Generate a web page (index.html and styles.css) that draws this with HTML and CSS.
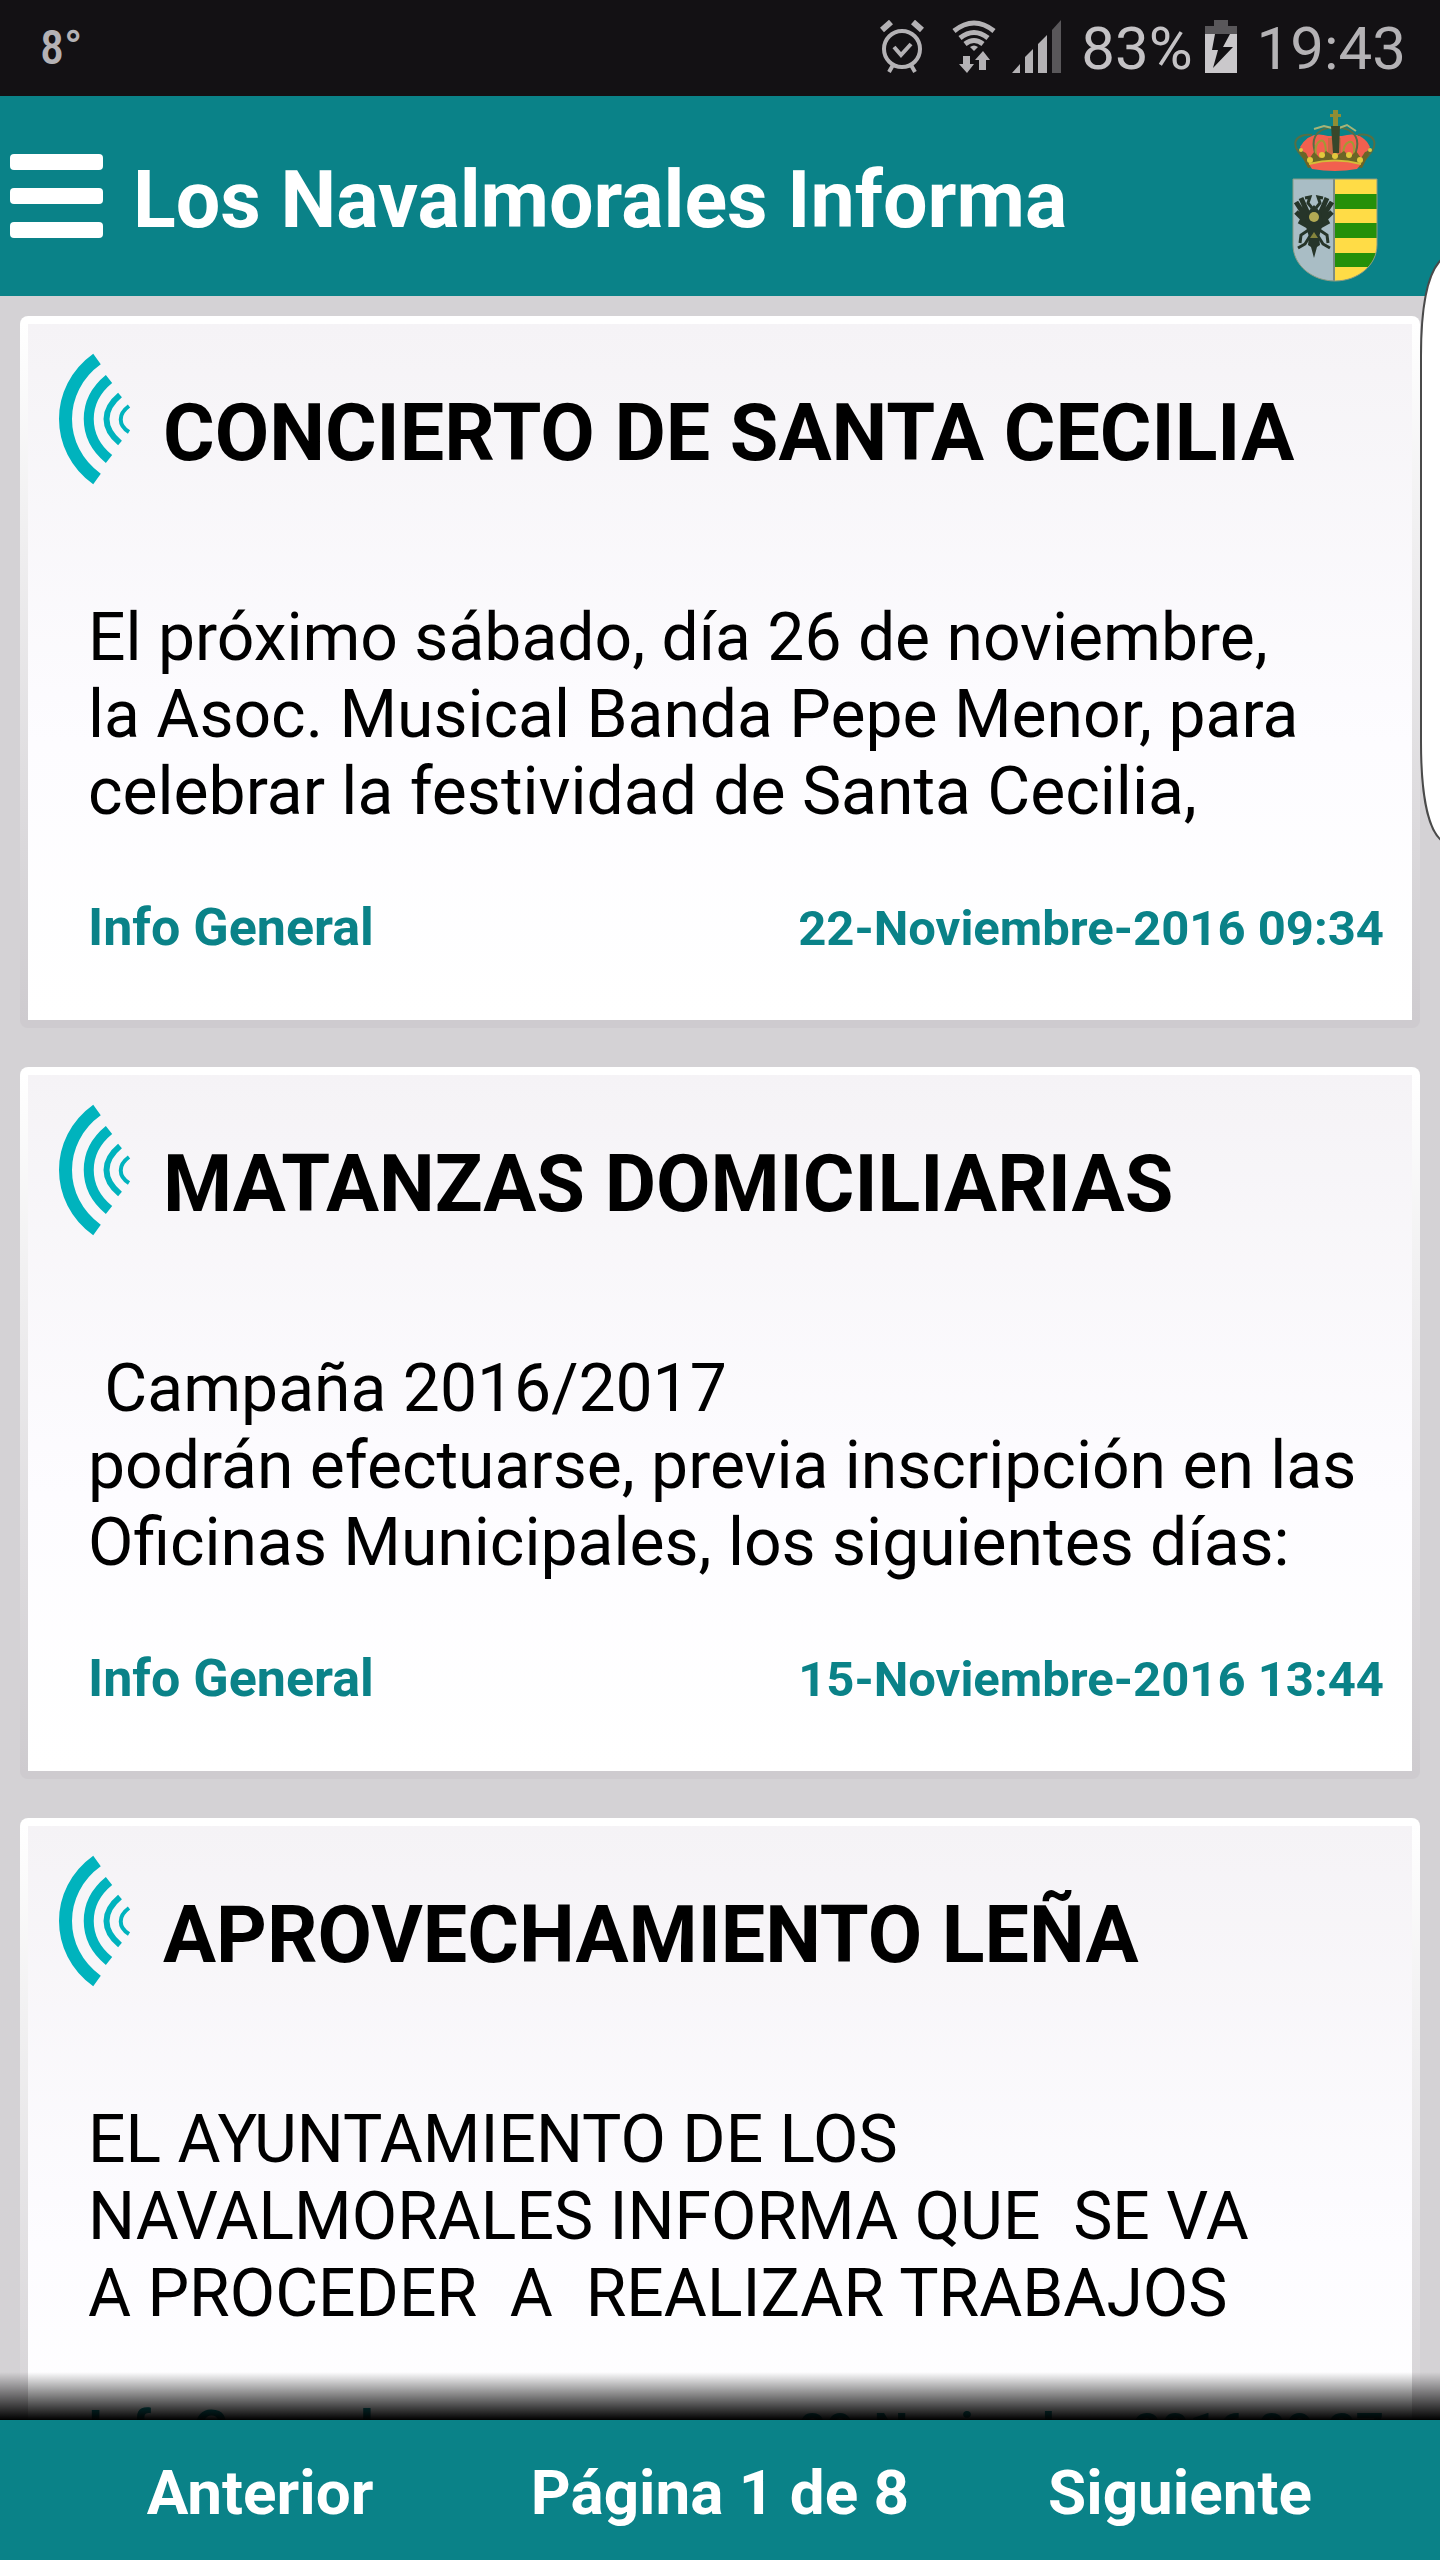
FILE: index.html
```html
<!DOCTYPE html>
<html lang="es">
<head>
<meta charset="utf-8">
<meta name="viewport" content="width=device-width, initial-scale=1">
<title>Los Navalmorales Informa</title>
<link rel="stylesheet" href="styles.css">
</head>
<body>
<svg width="0" height="0" class="sprite" aria-hidden="true">
  <symbol id="waves" viewBox="0 0 74 132">
    <g fill="none" stroke="#00b3bd">
      <path d="M39 6C-3 36-3 96 39 126" stroke-width="13"/>
      <path d="M51 26C24 48 24 84 51 106" stroke-width="10"/>
      <path d="M62 42C44 57 44 75 62 90" stroke-width="6"/>
      <path d="M71 53C60 61 60 72 71 79" stroke-width="4"/>
    </g>
  </symbol>
</svg>
<div class="status">
  <span class="temp">8°</span>
  <div class="status-right">
    <svg class="alarm" width="44" height="54" viewBox="0 0 44 54" fill="none" stroke="#b4b2b5" stroke-width="4">
      <circle cx="22" cy="29" r="18"/><path d="M14 27l7 8 10-11M13 45l-4 7M31 45l4 7"/><path d="M2 10l9-8M42 10l-9-8" stroke-width="6"/>
    </svg>
    <svg class="wifi" width="44" height="54" viewBox="0 0 44 54" fill="none" stroke="#b4b2b5" stroke-width="5">
      <path d="M2 11Q22-5 42 11M8 18Q22 7 36 18M13 24Q22 17 31 24"/><path d="M18 27Q22 24 26 27L22 31z" fill="#b4b2b5" stroke="none"/>
      <path d="M11 36h7v8h4l-7 9-8-9h4zM27 50h7V40h4l-7-9-8 9h4z" fill="#b4b2b5" stroke="none"/>
    </svg>
    <svg class="signal" width="49" height="54" viewBox="0 0 49 54" fill="#b4b2b5">
      <path d="M0 53l8-9v9zM13 53V37l8-8v24zM26 53V24l9-9v38z"/><path d="M40 53V10l9-10v53z" fill="#59575a"/>
    </svg>
    <span class="charge">83%</span>
    <svg class="battery" width="32" height="54" viewBox="0 0 32 54">
      <path d="M0 13h32v40H0z" fill="#cac8cb"/><path d="M9 0h14v6h9v8H0V6h9z" fill="#59575a"/>
      <path d="M10 14h15l-7 13h10L8 48l5-18H7z" fill="#131114"/>
    </svg>
    <span class="clock">19:43</span>
  </div>
</div>
<header class="topbar">
  <button class="menu" type="button" aria-label="Menú"><span></span><span></span><span></span></button>
  <h1 class="app-title">Los Navalmorales Informa</h1>
  <svg class="crest" width="86" height="172" viewBox="0 0 86 172" role="img" aria-label="Escudo">
    <path d="M8 37Q18 20 36 26h14Q70 20 78 37L66 55H20z" fill="#f2604f"/>
    <path d="M36 28h13v22H36z" fill="#c86a45"/>
    <g fill="none" stroke="#4f6b3c" stroke-width="2">
      <path d="M15 51C-6 33 5 23 20 25M71 51C92 33 80 22 66 25M26 50C16 29 24 19 40 17M60 50C72 29 62 19 46 17" stroke="#566f45"/>
      <path d="M24 46q-2-12 4-15t6 14M51 46q0-12 6-14t5 13" stroke="#a09a35"/>
      <path d="M22 19l10-3 8 2M47 18l8-3 9 6" stroke="#a6b478"/>
    </g>
    <path d="M39 16h9l-1 27h-6z" fill="#38472b"/>
    <path d="M41 0h5v4h3v3h-3v9h-5V7h-3V4h3z" fill="#8f8d35"/>
    <path d="M6 39l8 4 3 6 5-7 6 6 6-7 9 6 9-6 6 6 6-6 5 7 4-6 6-2-9 18Q43 52 16 58z" fill="#6b6526"/>
    <g fill="#e2c83c"><circle cx="9" cy="40" r="2"/><circle cx="18" cy="50" r="3"/><circle cx="30" cy="45" r="3"/><circle cx="43" cy="46" r="3"/><circle cx="57" cy="45" r="3"/><circle cx="68" cy="50" r="3"/><circle cx="78" cy="40" r="2"/></g>
    <path d="M17 54Q43 47 69 54l-4 5Q43 63 20 59z" fill="#f2604f"/><path d="M17 54Q43 47 69 54" fill="none" stroke="#d5bc38" stroke-width="2"/>
    <clipPath id="shield"><path d="M1 69h84v66c0 20-19 36-42 36S1 155 1 135z"/></clipPath>
    <g clip-path="url(#shield)">
      <path d="M0 68h43v104H0z" fill="#a9bdc5"/><path d="M43 68h43v104H43z" fill="#ffdc46"/>
      <path d="M43 84h43v15H43zM43 113h43v15H43zM43 143h43v14H43z" fill="#259009"/>
      <path d="M42 68v104" stroke="#7b8b85" stroke-width="2"/>
    </g>
    <path d="M1 69h84v66c0 20-19 36-42 36S1 155 1 135z" fill="none" stroke="#8b9b84" stroke-width="1"/>
    <g fill="none" stroke="#263529" stroke-width="5">
      <path d="M20 98l-4-5 2-6-5 1M24 98l4-5-2-6 5 1" stroke-width="3"/>
      <path d="M17 106L9 88M15 109L4 92M15 113L4 102M16 116L7 111M27 106l8-18M29 109l11-17M29 113l11-11M28 116l9-5"/>
      <path d="M18 119l-9 6-1 8M26 119l9 6 1 8M18 126l-5 8-7 4M26 126l5 8 7 4" stroke-width="3"/>
    </g>
    <path d="M22 95l7 8 2 10-4 14 1 8-3 2-3 11-3-11-3-2 1-8-4-14 2-10z" fill="#263529"/>
    <circle cx="22" cy="107" r="5" fill="#b2aa54"/><path d="M22 122l4 6h-8z" fill="#85853c"/>
  </svg>
</header>
<main class="feed">
  <article class="card">
    <div class="card-head"><svg class="waves" aria-hidden="true"><use href="#waves"/></svg><h2>CONCIERTO DE SANTA CECILIA</h2></div>
    <p class="excerpt">El próximo sábado, día 26 de noviembre,
la Asoc. Musical Banda Pepe Menor, para
celebrar la festividad de Santa Cecilia,</p>
    <div class="meta"><span class="category">Info General</span><time datetime="2016-11-22T09:34">22-Noviembre-2016 09:34</time></div>
  </article>
  <article class="card">
    <div class="card-head"><svg class="waves" aria-hidden="true"><use href="#waves"/></svg><h2>MATANZAS DOMICILIARIAS</h2></div>
    <p class="excerpt"> Campaña 2016/2017
podrán efectuarse, previa inscripción en las
Oficinas Municipales, los siguientes días:</p>
    <div class="meta"><span class="category">Info General</span><time datetime="2016-11-15T13:44">15-Noviembre-2016 13:44</time></div>
  </article>
  <article class="card">
    <div class="card-head"><svg class="waves" aria-hidden="true"><use href="#waves"/></svg><h2>APROVECHAMIENTO LEÑA</h2></div>
    <p class="excerpt">EL AYUNTAMIENTO DE LOS
NAVALMORALES INFORMA QUE  SE VA
A PROCEDER  A  REALIZAR TRABAJOS</p>
    <div class="meta"><span class="category">Info General</span><time datetime="2016-11-09T09:27">09-Noviembre-2016 09:27</time></div>
  </article>
</main>
<nav class="pager">
  <button type="button">Anterior</button>
  <span>Página 1 de 8</span>
  <button type="button">Siguiente</button>
</nav>
<svg class="edge-handle" width="20" height="592" viewBox="0 0 20 592" aria-hidden="true"><path d="M21 4C7 18 1 55 1 100V486C1 534 7 572 21 584" fill="#fff" stroke="#4a4a4a" stroke-width="2"/></svg>
</body>
</html>
```

FILE: styles.css
```css
* { box-sizing: border-box; }
body {
  margin: 0;
  height: 100vh;
  display: flex;
  flex-direction: column;
  background: #d4d2d5;
  color: #000;
  font-family: Roboto, "Noto Sans", sans-serif;
}
h1, h2, p { margin: 0; }
button { padding: 0; border: 0; background: none; color: inherit; font: inherit; }
.sprite { position: absolute; }

.status {
  flex: none;
  height: 96px;
  display: flex;
  align-items: center;
  justify-content: space-between;
  padding: 0 34px 0 40px;
  background: #131114;
  color: #b4b2b5;
  font-size: 60px;
  line-height: 70px;
}
.temp { font-family: "Roboto Condensed", "Liberation Sans Narrow", Roboto, sans-serif; font-size: 48px; font-weight: 500; }
.status-right { display: flex; align-items: center; padding-top: 2px; }
.status-right svg { margin-bottom: 4px; }
.wifi { margin-left: 28px; }
.signal { margin-left: 16px; }
.charge { margin-left: 20px; color: #c4c2c5; }
.battery { margin-left: 12px; }
.clock { margin-left: 20px; }

.topbar {
  flex: none;
  height: 200px;
  display: flex;
  align-items: center;
  padding: 0 62px 0 10px;
  background: #0a8288;
  color: #fff;
}
.menu { width: 93px; display: grid; gap: 18px; margin-right: 30px; }
.menu span { height: 16px; border-radius: 4px; background: #fff; }
.app-title { flex: 1; padding-top: 8px; font-size: 79px; line-height: 94px; font-weight: 700; white-space: nowrap; }

.feed {
  flex: 1;
  min-height: 0;
  display: flex;
  flex-direction: column;
  gap: 39px;
  padding: 20px;
  overflow-y: auto;
  scrollbar-width: none;
}
.card {
  flex: none;
  padding: 29px 28px 62px 30px;
  border: 8px solid transparent;
  border-radius: 8px;
  background:
    linear-gradient(#f5f3f6, #fdfcff 60%, #fff) padding-box,
    linear-gradient(#fff 8px, #cecbcf 704px) border-box;
}
.card-head { display: flex; align-items: flex-start; gap: 31px; height: 246px; }
.waves { width: 74px; height: 132px; }
.card h2 { padding-top: 33px; font-size: 79px; line-height: 94px; font-weight: 700; white-space: nowrap; }
.excerpt { padding-left: 30px; font-size: 66px; line-height: 77px; white-space: pre; }
.meta {
  display: flex;
  align-items: baseline;
  justify-content: space-between;
  margin-top: 68px;
  padding-left: 30px;
  color: #0a8288;
  font-size: 49px;
  line-height: 59px;
  font-weight: 700;
}
.category { font-size: 52px; }

.pager {
  flex: none;
  position: relative;
  height: 140px;
  display: grid;
  grid-template-columns: repeat(3, 1fr);
  align-items: center;
  justify-items: center;
  padding: 6px 30px 0;
  background: #0a8288;
  color: #fff;
  font-size: 62px;
  line-height: 72px;
  font-weight: 700;
}
.pager::before {
  content: "";
  position: absolute;
  inset: -48px 0 auto;
  height: 48px;
  background: linear-gradient(transparent, #000);
}
.edge-handle { position: absolute; top: 256px; right: 0; }
```
